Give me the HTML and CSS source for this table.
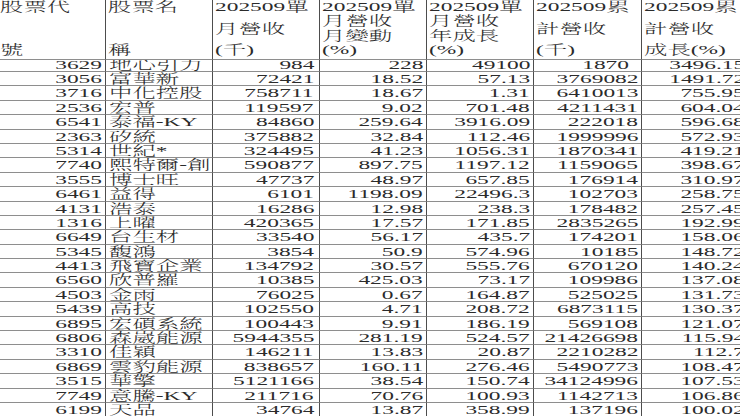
FILE: index.html
```html
<!DOCTYPE html>
<html lang="zh-Hant">
<head>
<meta charset="utf-8">
<title>營收成長</title>
<link rel="stylesheet" href="styles.css">
</head>
<body>
<div class="sheet">
  <div class="h"><span class="t">股票代</span><span class="t">號</span></div>
  <div class="h"><span class="t">股票名</span><span class="t">稱</span></div>
  <div class="h"><span class="t">202509單</span><span class="t">月營收</span><span class="t">(千)</span></div>
  <div class="h"><span class="t">202509單</span><span class="t">月營收</span><span class="t">月變動</span><span class="t">(%)</span></div>
  <div class="h"><span class="t">202509單</span><span class="t">月營收</span><span class="t">年成長</span><span class="t">(%)</span></div>
  <div class="h"><span class="t">202509累</span><span class="t">計營收</span><span class="t">(千)</span></div>
  <div class="h"><span class="t">202509累</span><span class="t">計營收</span><span class="t">成長(%)</span></div>

  <div class="c n"><span class="t">3629</span></div><div class="c s"><span class="t">地心引力</span></div><div class="c n"><span class="t">984</span></div><div class="c n"><span class="t">228</span></div><div class="c n"><span class="t">49100</span></div><div class="c n wide"><span class="t">1870</span></div><div class="c n"><span class="t">3496.15</span></div>
  <div class="c n"><span class="t">3056</span></div><div class="c s"><span class="t">富華新</span></div><div class="c n"><span class="t">72421</span></div><div class="c n"><span class="t">18.52</span></div><div class="c n"><span class="t">57.13</span></div><div class="c n"><span class="t">3769082</span></div><div class="c n"><span class="t">1491.72</span></div>
  <div class="c n"><span class="t">3716</span></div><div class="c s"><span class="t">中化控股</span></div><div class="c n"><span class="t">758711</span></div><div class="c n"><span class="t">18.67</span></div><div class="c n"><span class="t">1.31</span></div><div class="c n"><span class="t">6410013</span></div><div class="c n"><span class="t">755.95</span></div>
  <div class="c n"><span class="t">2536</span></div><div class="c s"><span class="t">宏普</span></div><div class="c n"><span class="t">119597</span></div><div class="c n"><span class="t">9.02</span></div><div class="c n"><span class="t">701.48</span></div><div class="c n"><span class="t">4211431</span></div><div class="c n"><span class="t">604.04</span></div>
  <div class="c n"><span class="t">6541</span></div><div class="c s"><span class="t">泰福-KY</span></div><div class="c n"><span class="t">84860</span></div><div class="c n"><span class="t">259.64</span></div><div class="c n"><span class="t">3916.09</span></div><div class="c n"><span class="t">222018</span></div><div class="c n"><span class="t">596.68</span></div>
  <div class="c n"><span class="t">2363</span></div><div class="c s"><span class="t">矽統</span></div><div class="c n"><span class="t">375882</span></div><div class="c n"><span class="t">32.84</span></div><div class="c n"><span class="t">112.46</span></div><div class="c n"><span class="t">1999996</span></div><div class="c n"><span class="t">572.93</span></div>
  <div class="c n"><span class="t">5314</span></div><div class="c s"><span class="t">世紀*</span></div><div class="c n"><span class="t">324495</span></div><div class="c n"><span class="t">41.23</span></div><div class="c n"><span class="t">1056.31</span></div><div class="c n"><span class="t">1870341</span></div><div class="c n"><span class="t">419.21</span></div>
  <div class="c n"><span class="t">7740</span></div><div class="c s"><span class="t">熙特爾-創</span></div><div class="c n"><span class="t">590877</span></div><div class="c n"><span class="t">897.75</span></div><div class="c n"><span class="t">1197.12</span></div><div class="c n"><span class="t">1159065</span></div><div class="c n"><span class="t">398.67</span></div>
  <div class="c n"><span class="t">3555</span></div><div class="c s"><span class="t">博士旺</span></div><div class="c n"><span class="t">47737</span></div><div class="c n"><span class="t">48.97</span></div><div class="c n"><span class="t">657.85</span></div><div class="c n"><span class="t">176914</span></div><div class="c n"><span class="t">310.97</span></div>
  <div class="c n"><span class="t">6461</span></div><div class="c s"><span class="t">益得</span></div><div class="c n"><span class="t">6101</span></div><div class="c n"><span class="t">1198.09</span></div><div class="c n"><span class="t">22496.3</span></div><div class="c n"><span class="t">102703</span></div><div class="c n"><span class="t">258.75</span></div>
  <div class="c n"><span class="t">4131</span></div><div class="c s"><span class="t">浩泰</span></div><div class="c n"><span class="t">16286</span></div><div class="c n"><span class="t">12.98</span></div><div class="c n"><span class="t">238.3</span></div><div class="c n"><span class="t">178482</span></div><div class="c n"><span class="t">257.45</span></div>
  <div class="c n"><span class="t">1316</span></div><div class="c s"><span class="t">上曜</span></div><div class="c n"><span class="t">420365</span></div><div class="c n"><span class="t">17.57</span></div><div class="c n"><span class="t">171.85</span></div><div class="c n"><span class="t">2835265</span></div><div class="c n"><span class="t">192.99</span></div>
  <div class="c n"><span class="t">6649</span></div><div class="c s"><span class="t">台生材</span></div><div class="c n"><span class="t">33540</span></div><div class="c n"><span class="t">56.17</span></div><div class="c n"><span class="t">435.7</span></div><div class="c n"><span class="t">174201</span></div><div class="c n"><span class="t">158.06</span></div>
  <div class="c n"><span class="t">5345</span></div><div class="c s"><span class="t">馥鴻</span></div><div class="c n"><span class="t">3854</span></div><div class="c n"><span class="t">50.9</span></div><div class="c n"><span class="t">574.96</span></div><div class="c n"><span class="t">10185</span></div><div class="c n"><span class="t">148.72</span></div>
  <div class="c n"><span class="t">4413</span></div><div class="c s"><span class="t">飛寶企業</span></div><div class="c n"><span class="t">134792</span></div><div class="c n"><span class="t">30.57</span></div><div class="c n"><span class="t">555.76</span></div><div class="c n"><span class="t">670120</span></div><div class="c n"><span class="t">140.24</span></div>
  <div class="c n"><span class="t">6560</span></div><div class="c s"><span class="t">欣普羅</span></div><div class="c n"><span class="t">10385</span></div><div class="c n"><span class="t">425.03</span></div><div class="c n"><span class="t">73.17</span></div><div class="c n"><span class="t">109986</span></div><div class="c n"><span class="t">137.08</span></div>
  <div class="c n"><span class="t">4503</span></div><div class="c s"><span class="t">金雨</span></div><div class="c n"><span class="t">76025</span></div><div class="c n"><span class="t">0.67</span></div><div class="c n"><span class="t">164.87</span></div><div class="c n"><span class="t">525025</span></div><div class="c n"><span class="t">131.73</span></div>
  <div class="c n"><span class="t">5439</span></div><div class="c s"><span class="t">高技</span></div><div class="c n"><span class="t">102550</span></div><div class="c n"><span class="t">4.71</span></div><div class="c n"><span class="t">208.72</span></div><div class="c n"><span class="t">6873115</span></div><div class="c n"><span class="t">130.37</span></div>
  <div class="c n"><span class="t">6895</span></div><div class="c s"><span class="t">宏碩系統</span></div><div class="c n"><span class="t">100443</span></div><div class="c n"><span class="t">9.91</span></div><div class="c n"><span class="t">186.19</span></div><div class="c n"><span class="t">569108</span></div><div class="c n"><span class="t">121.07</span></div>
  <div class="c n"><span class="t">6806</span></div><div class="c s"><span class="t">森崴能源</span></div><div class="c n"><span class="t">5944355</span></div><div class="c n"><span class="t">281.19</span></div><div class="c n"><span class="t">524.57</span></div><div class="c n"><span class="t">21426698</span></div><div class="c n"><span class="t">115.94</span></div>
  <div class="c n"><span class="t">3310</span></div><div class="c s"><span class="t">佳穎</span></div><div class="c n"><span class="t">146211</span></div><div class="c n"><span class="t">13.83</span></div><div class="c n"><span class="t">20.87</span></div><div class="c n"><span class="t">2210282</span></div><div class="c n"><span class="t">112.7</span></div>
  <div class="c n"><span class="t">6869</span></div><div class="c s"><span class="t">雲豹能源</span></div><div class="c n"><span class="t">838657</span></div><div class="c n"><span class="t">160.11</span></div><div class="c n"><span class="t">276.46</span></div><div class="c n"><span class="t">5490773</span></div><div class="c n"><span class="t">108.47</span></div>
  <div class="c n"><span class="t">3515</span></div><div class="c s"><span class="t">華擎</span></div><div class="c n"><span class="t">5121166</span></div><div class="c n"><span class="t">38.54</span></div><div class="c n"><span class="t">150.74</span></div><div class="c n"><span class="t">34124996</span></div><div class="c n"><span class="t">107.53</span></div>
  <div class="c n"><span class="t">7749</span></div><div class="c s"><span class="t">意騰-KY</span></div><div class="c n"><span class="t">211716</span></div><div class="c n"><span class="t">70.76</span></div><div class="c n"><span class="t">100.93</span></div><div class="c n"><span class="t">1142713</span></div><div class="c n"><span class="t">106.86</span></div>
  <div class="c n"><span class="t">6199</span></div><div class="c s"><span class="t">天品</span></div><div class="c n"><span class="t">34764</span></div><div class="c n"><span class="t">13.87</span></div><div class="c n"><span class="t">358.99</span></div><div class="c n"><span class="t">137196</span></div><div class="c n"><span class="t">100.02</span></div>
</div>
</body>
</html>
```
FILE: styles.css
```css
html, body {
  margin: 0;
  padding: 0;
  background: #ffffff;
  overflow: hidden;
}

body {
  width: 740px;
  height: 416px;
  font-family: "Liberation Serif", "Noto Serif CJK TC", "Noto Sans CJK TC", serif;
  font-size: 13px;
  font-weight: 300;
  color: #2b2b2b;
}

.sheet {
  display: grid;
  grid-template-columns: 106px 107px 107px 107px 107px 108px 107px;
  grid-template-rows: 60px 12px;
  grid-auto-rows: 14.4px;
  width: max-content;
}

.h,
.c {
  box-sizing: border-box;
  border-right: 1px solid #4d4d4d;
  border-bottom: 1px solid #8e8e8e;
  overflow: hidden;
  min-width: 0;
}

.t {
  display: block;
  white-space: nowrap;
  transform: scaleX(1.8);
}

/* header cells: lines spread over the full height */
.h {
  display: flex;
  flex-direction: column;
  justify-content: space-between;
  align-items: flex-start;
  padding-left: 2px;
  padding-bottom: 2px;
}

.h:first-child {
  padding-left: 0;
}

.h .t {
  line-height: 14px;
  transform-origin: left top;
}

/* data cells */
.c {
  display: flex;
  align-items: flex-end;
}

.c .t {
  line-height: 13.4px;
}

.n {
  justify-content: flex-end;
  padding-right: 3px;
}

.n .t {
  transform-origin: right bottom;
}

.s {
  justify-content: flex-start;
  padding-left: 3px;
}

.s .t {
  transform-origin: left bottom;
}

.sheet > .c:nth-child(7n+3) {
  padding-right: 5px;
}

.sheet > .c.wide {
  padding-right: 12px;
}
```
